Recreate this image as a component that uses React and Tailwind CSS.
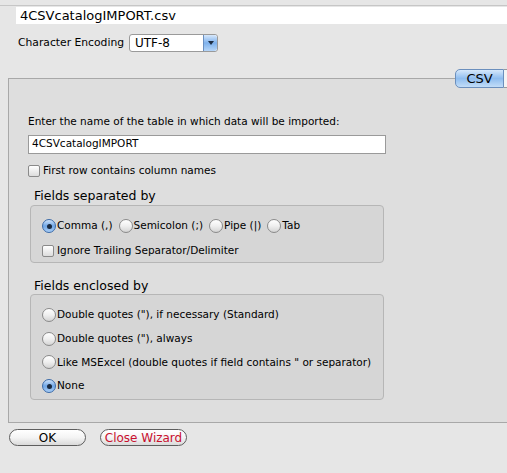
import React from 'react';

const font = { fontFamily: '"DejaVu Sans", "Liberation Sans", sans-serif' };

const Radio = ({ checked }) => (
  <span
    className={`inline-flex h-[14px] w-[14px] shrink-0 items-center justify-center rounded-full border ${
      checked
        ? 'border-[#3b6aa8] bg-gradient-to-b from-[#cfe3fa] via-[#6fa6e6] to-[#a9cdf5]'
        : 'border-[#8a8a8a] bg-gradient-to-b from-[#ffffff] via-[#efefef] to-[#d4d4d4]'
    }`}
  >
    {checked && <span className="h-[5px] w-[5px] rounded-full bg-[#1a2a40]" />}
  </span>
);

const Checkbox = () => (
  <span className="inline-block h-[12px] w-[12px] shrink-0 rounded-[2px] border border-[#8a8a8a] bg-gradient-to-b from-[#ffffff] to-[#dcdcdc]" />
);

const Option = ({ checked, children }) => (
  <label className="flex items-center gap-[1px] whitespace-nowrap text-[10.5px] text-black">
    <Radio checked={checked} />
    <span>{children}</span>
  </label>
);

export default function App() {
  return (
    <div className="relative h-[473px] w-[507px] overflow-hidden bg-[#e6e6e6]" style={font}>
      {/* file name */}
      <div className="mt-[5px] h-[1px] bg-[#c6c6c6]" />
      <div className="ml-[16px] mt-[1px] flex h-[17px] items-center bg-white pl-[4px] text-[13px] text-black">
        4CSVcatalogIMPORT.csv
      </div>

      {/* encoding */}
      <div className="mt-[10px] flex items-center pl-[18px]">
        <span className="w-[111px] shrink-0 whitespace-nowrap text-[10.75px] text-black">Character Encoding</span>
        <div className="flex h-[18px] w-[89px] items-stretch rounded-[3px] border border-[#9a9a9a] bg-white">
          <span className="flex flex-1 items-center pl-[5px] text-[12px] text-black">UTF-8</span>
          <span className="flex w-[14px] items-center justify-center rounded-r-[3px] border-l border-[#6a8fc0] bg-gradient-to-b from-[#d7e8fb] via-[#7eb1ec] to-[#b6d6f8]">
            <span className="h-0 w-0 border-l-[3px] border-r-[3px] border-t-[4px] border-l-transparent border-r-transparent border-t-[#1d2d44]" />
          </span>
        </div>
      </div>

      {/* import panel */}
      <div className="relative ml-[8px] mt-[26px] h-[345px] border-b border-l border-t border-[#a8a8a8] bg-[#dedede] pl-[19px] pt-[35px]">
        <div className="absolute -top-[10px] left-[446px] flex h-[19px] w-[49px] items-center justify-center rounded-l-[5px] border border-[#6b8fbd] bg-gradient-to-b from-[#d6e8fb] via-[#8fbdef] to-[#c2ddf8] text-[13px] text-black">
          CSV
        </div>
        <div className="absolute -top-[10px] left-[495px] h-[19px] w-[10px] border-y border-[#9a9a9a] bg-[#f4f4f4]" />

        <div className="whitespace-nowrap text-[10.5px] text-black">Enter the name of the table in which data will be imported:</div>
        <div className="mt-[5px] flex h-[19px] w-[358px] items-center border border-[#9a9a9a] bg-white pl-[3px] text-[10.5px] text-black">
          4CSVcatalogIMPORT
        </div>
        <label className="mt-[9px] flex items-center gap-[3px] text-[10.5px] text-black">
          <Checkbox />
          <span>First row contains column names</span>
        </label>

        <div className="ml-[6px] mt-[8px] text-[12.5px] text-black">Fields separated by</div>
        <div className="ml-[2px] h-[58px] w-[354px] rounded-[4px] border border-[#b6b6b6] bg-[#d6d6d6] pl-[11px] pt-[12px]">
          <div className="flex items-center gap-[6px]">
            <Option checked>Comma (,)</Option>
            <Option>Semicolon (;)</Option>
            <Option>Pipe (|)</Option>
            <Option>Tab</Option>
          </div>
          <label className="mt-[9px] flex items-center gap-[3px] text-[10.5px] text-black">
            <Checkbox />
            <span>Ignore Trailing Separator/Delimiter</span>
          </label>
        </div>

        <div className="ml-[6px] mt-[14px] text-[12.5px] text-black">Fields enclosed by</div>
        <div className="ml-[2px] -mt-[2px] flex h-[106px] w-[354px] flex-col gap-[8px] rounded-[4px] border border-[#b6b6b6] bg-[#d6d6d6] pl-[11px] pt-[12px]">
          <Option>Double quotes ("), if necessary (Standard)</Option>
          <Option>Double quotes ("), always</Option>
          <Option>Like MSExcel (double quotes if field contains " or separator)</Option>
          <Option checked>None</Option>
        </div>
      </div>

      {/* footer buttons */}
      <div className="mt-[6px] flex items-center gap-[14px] pl-[9px]">
        <button className="flex h-[17px] w-[77px] items-center justify-center rounded-full border border-[#5e5e5e] bg-gradient-to-b from-[#ffffff] via-[#f4f4f4] to-[#dadada] text-[12px] text-black">
          OK
        </button>
        <button className="flex h-[17px] w-[87px] items-center justify-center rounded-full border border-[#5e5e5e] bg-gradient-to-b from-[#ffffff] via-[#f4f4f4] to-[#dadada] text-[12px] text-[#c8102e]">
          Close Wizard
        </button>
      </div>
    </div>
  );
}
